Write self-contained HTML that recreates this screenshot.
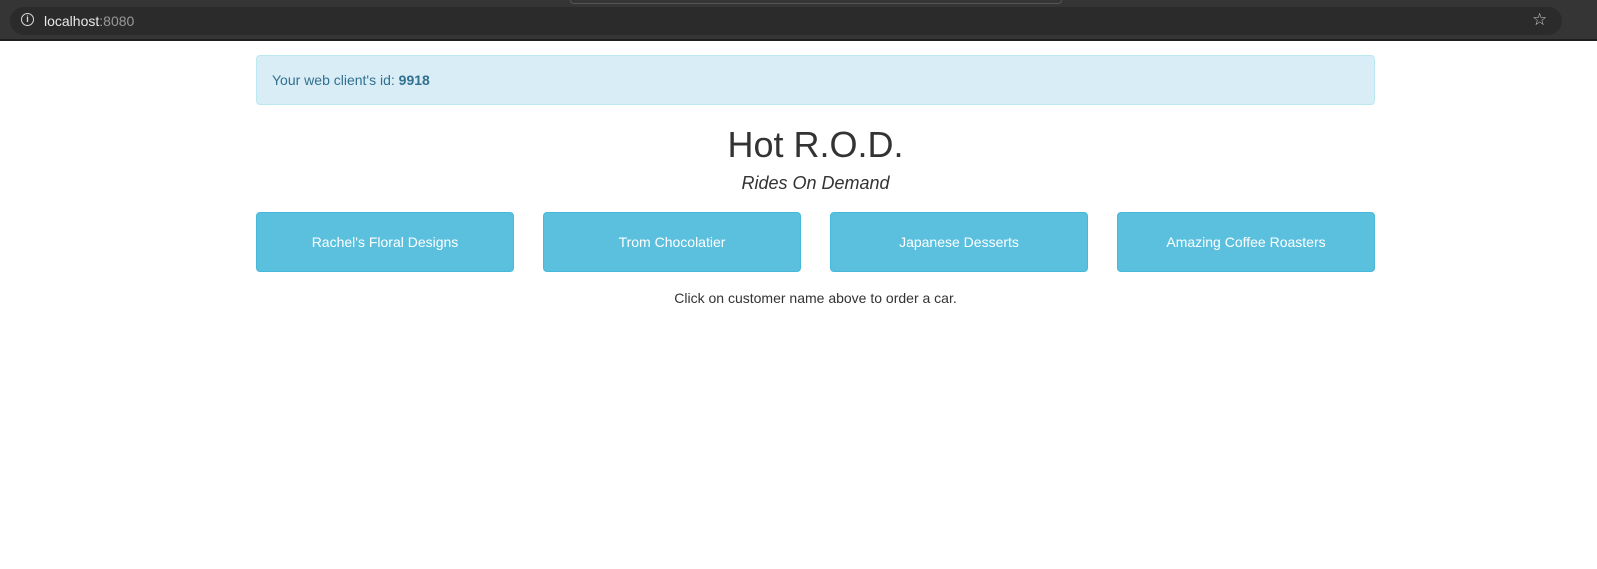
<!DOCTYPE html>
<html><head><style>
body{margin:0;width:1597px;height:569px;background:#fff;font-family:"Liberation Sans",sans-serif;color:#333;position:relative;overflow:hidden}
.top{position:absolute;left:0;top:0;width:1597px;height:39px;background:#353535;border-bottom:2px solid #1f1f1f}
.tab{position:absolute;top:0;left:570px;width:490px;height:3px;border:1px solid #555;border-top:none;border-radius:0 0 4px 4px}
.pill{position:absolute;left:10px;top:7px;width:1552px;height:28px;border-radius:14px;background:#2b2b2b}
.url{position:absolute;left:44px;top:13px;font-size:14px;color:#e8e8e8}
.url span{color:#999}
.info{position:absolute;left:21px;top:13px;width:11px;height:11px;border:1.5px solid #ddd;border-radius:50%;font-size:9px;color:#ddd;text-align:center;line-height:11px;font-weight:bold}
.star{position:absolute;left:1532px;top:10px;color:#ccc;font-size:17px}
.alert{position:absolute;left:256px;top:55px;width:1117px;height:48px;background:#d9edf7;border:1px solid #bce8f1;border-radius:4px;color:#31708f;font-size:14px;line-height:49px;padding-left:15px;box-sizing:border-box;width:1119px;height:50px}
h1{position:absolute;left:0;width:1631px;text-align:center;top:124px;margin:0;font-size:36px;font-weight:normal}
.sub{position:absolute;left:0;width:1631px;text-align:center;top:173px;font-size:18px;font-style:italic}
.btn{position:absolute;top:212px;width:258px;height:60px;background:#5bc0de;border:1px solid #46b8da;border-radius:4px;box-sizing:border-box;color:#fff;font-size:14px;text-align:center;line-height:58px}
.hint{position:absolute;left:0;width:1631px;text-align:center;top:290px;font-size:14px}
</style></head><body>
<div class="top"><div class="tab"></div><div class="pill"></div><div class="info">i</div><div class="url">localhost<span>:8080</span></div><div class="star">☆</div></div>
<div class="alert">Your web client's id: <b>9918</b></div>
<h1>Hot R.O.D.</h1>
<div class="sub">Rides On Demand</div>
<div class="btn" style="left:256px">Rachel's Floral Designs</div>
<div class="btn" style="left:543px">Trom Chocolatier</div>
<div class="btn" style="left:830px">Japanese Desserts</div>
<div class="btn" style="left:1117px">Amazing Coffee Roasters</div>
<div class="hint">Click on customer name above to order a car.</div>
</body></html>
